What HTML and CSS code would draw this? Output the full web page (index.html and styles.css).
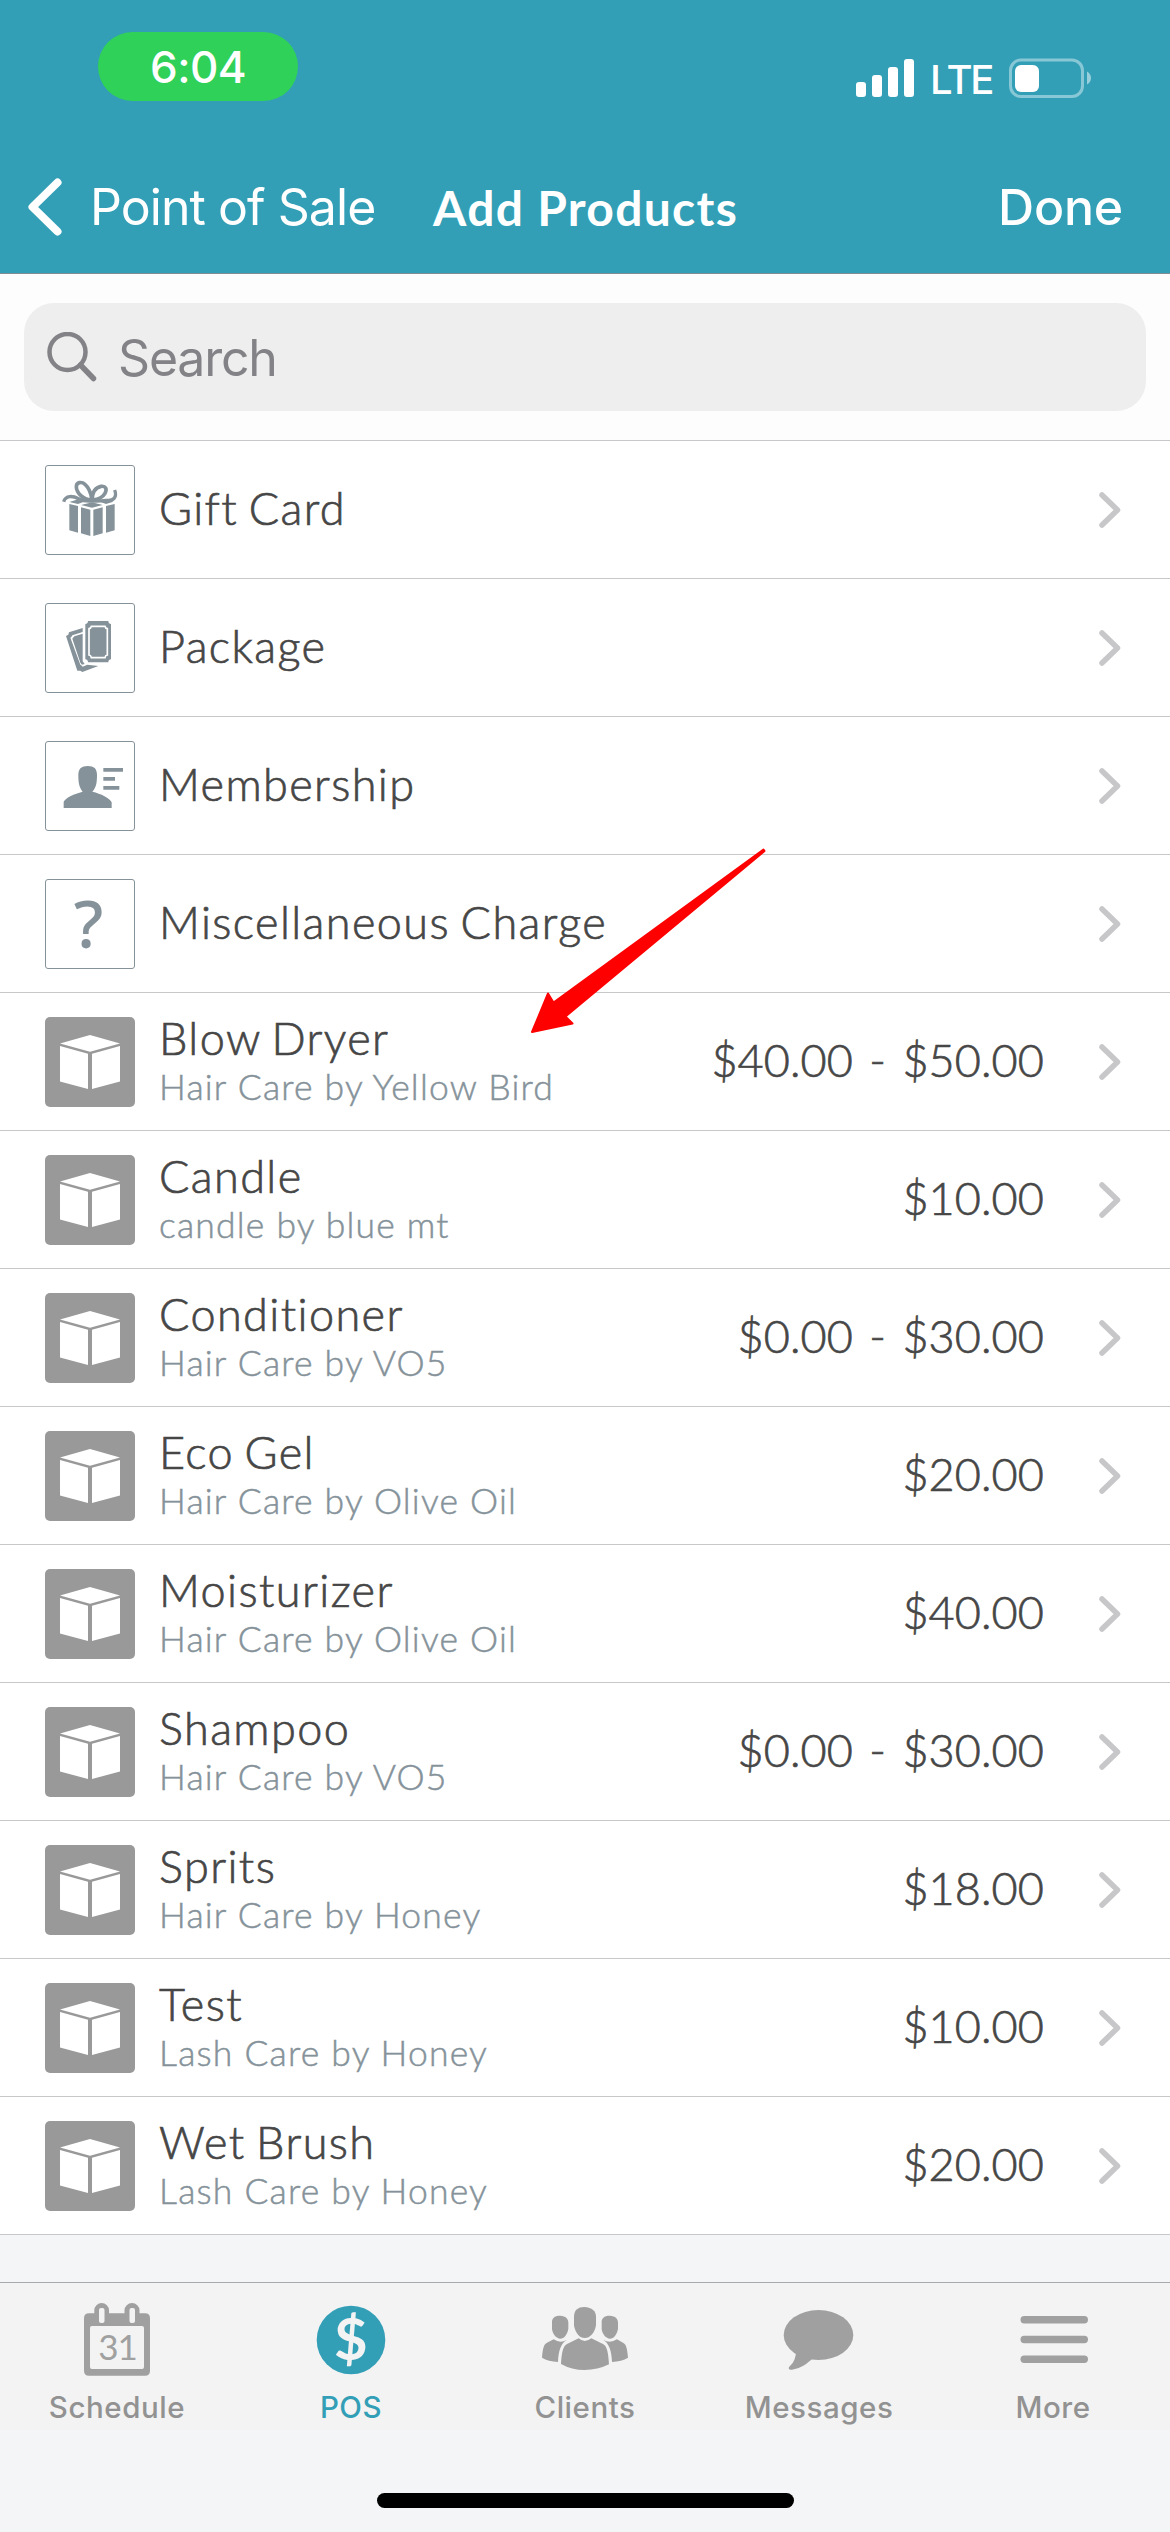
FILE: index.html
```html
<!DOCTYPE html>
<html lang="en">
<head>
<meta charset="utf-8">
<title>Add Products</title>
<link rel="stylesheet" href="styles.css">
</head>
<body>
<svg class="defs" width="0" height="0" aria-hidden="true">
  <symbol id="chevron" viewBox="0 0 22 36"><path d="M3 3 L18.5 18 L3 33" fill="none" stroke="#c7c7c9" stroke-width="5.5" stroke-linecap="round" stroke-linejoin="round"/></symbol>
  <symbol id="cube" viewBox="0 0 90 90"><path fill="#fff" d="M45 18 L75 26.5 L45 34.7 L15 26.5Z M15 29 L43 36.8 V72 L15 64.5Z M75 29 L47 36.8 V72 L75 64.5Z"/></symbol>
</svg>
<div class="screen">
  <header class="header">
    <div class="status">
      <div class="time">6:04</div>
      <div class="status-right">
        <svg width="58" height="38" viewBox="0 0 58 38" fill="#fff"><rect y="23" width="10" height="15" rx="3"/><rect x="16" y="16" width="10" height="22" rx="3"/><rect x="32" y="8" width="10" height="30" rx="3"/><rect x="48" width="10" height="38" rx="3"/></svg>
        <span class="lte">LTE</span>
        <svg width="83" height="40" viewBox="0 0 83 40"><rect x="1.5" y="2" width="72" height="36.500" rx="10.500" fill="none" stroke="#fff" stroke-opacity=".42" stroke-width="3"/><path d="M78 13.500 Q82 16 82 20 Q82 24 78 26.500Z" fill="#fff" fill-opacity=".5"/><rect x="6" y="7" width="24" height="27" rx="6" fill="#fff"/></svg>
      </div>
    </div>
    <nav class="nav">
      <svg class="back-icon" width="34" height="58" viewBox="0 0 34 58"><path d="M29.500 4.500 L4.500 29 L29.500 53.500" fill="none" stroke="#fff" stroke-width="8" stroke-linecap="round" stroke-linejoin="round"/></svg>
      <span class="back">Point of Sale</span>
      <h1 class="title">Add Products</h1>
      <span class="done">Done</span>
    </nav>
  </header>

  <div class="search-section">
    <div class="search">
      <svg width="50" height="50" viewBox="0 0 50 50" fill="none" stroke="#838387"><circle cx="20.500" cy="20" r="18" stroke-width="4.500"/><path d="M33.500 33 L46.500 46.500" stroke-width="5.500" stroke-linecap="round"/></svg>
      <span>Search</span>
    </div>
  </div>

  <main class="list">
    <div class="row">
      <div class="tile">
        <svg width="90" height="90" viewBox="45 45 270 270" fill="#85929a">
          <path d="M118 162 L144 168 V248 L118 241Z M153 172 L181 179 V258 L153 250Z M190 179 L218 172 V250 L190 258Z M228 168 L254 162 V241 L228 248Z"/>
          <path d="M118 156 L140 149 L166 154 L144 162Z M153 165 L186 157 L218 165 L186 173Z M206 154 L232 148 L250 155 L228 162Z"/>
          <path d="M186 149 C160 151 139 127 139 110 C139 96 155 94 165 103 C177 113 183 130 186 149 C187 126 197 112 213 109 C227 107 232 117 225 130 C219 141 203 151 186 149" fill="none" stroke="#85929a" stroke-width="11"/>
          <path d="M101 155 C107 135 128 137 146 146 C157 152 172 154 186 153 C202 154 215 153 229 151 C251 154 262 141 254 120" fill="none" stroke="#85929a" stroke-width="10"/>
        </svg>
      </div>
      <div class="name">Gift Card</div>
      <svg class="chevron"><use href="#chevron"/></svg>
    </div>
    <div class="row">
      <div class="tile">
        <svg width="90" height="90" viewBox="45 459 270 270" fill="#85929a">
          <path d="M108 558 L115 554 L117 547 L158 534 V546 L127 556 Q125 561 121 563 L151 644 Q155 645 158 650 L172 644 L205 648 L157 666 L151 662 L142 662 L139 653Z"/>
          <path d="M127 566 L133 559 L158 551 V634 L164 642 L156 644 L151 638Z"/>
          <path d="M174 513 H235 Q235 521 243 522 V628 Q235 629 235 637 H174 Q174 629 166 628 V522 Q174 521 174 513Z"/>
          <path d="M184 529 H225 Q226 535 232 536 V615 Q226 616 225 623 H184 Q183 616 177 615 V536 Q183 535 184 529Z" fill="none" stroke="#fff" stroke-width="5"/>
        </svg>
      </div>
      <div class="name">Package</div>
      <svg class="chevron"><use href="#chevron"/></svg>
    </div>
    <div class="row">
      <div class="tile">
        <svg width="90" height="90" viewBox="45 63 270 270" fill="#85929a">
          <path d="M101 264 V245 C108 232 132 222 158 215 C148 203 145 190 145 165 C145 146 155 138 173 138 C192 138 201 146 201 165 C201 190 198 203 187 215 C213 221 239 234 245 247 V264Z"/>
          <path d="M220 144 H279 V155 H220Z M220 171 H255 V182 H220Z M220 198 H268 V209 H220Z"/>
        </svg>
      </div>
      <div class="name">Membership</div>
      <svg class="chevron"><use href="#chevron"/></svg>
    </div>
    <div class="row">
      <div class="tile question">?</div>
      <div class="name">Miscellaneous Charge</div>
      <svg class="chevron"><use href="#chevron"/></svg>
    </div>
    <div class="row">
      <svg class="cube"><use href="#cube"/></svg>
      <div class="info"><div class="name">Blow Dryer</div><div class="sub">Hair Care by Yellow Bird</div></div>
      <div class="price">$40.00 - $50.00</div>
      <svg class="chevron"><use href="#chevron"/></svg>
    </div>
    <div class="row">
      <svg class="cube"><use href="#cube"/></svg>
      <div class="info"><div class="name">Candle</div><div class="sub">candle by blue mt</div></div>
      <div class="price">$10.00</div>
      <svg class="chevron"><use href="#chevron"/></svg>
    </div>
    <div class="row">
      <svg class="cube"><use href="#cube"/></svg>
      <div class="info"><div class="name">Conditioner</div><div class="sub">Hair Care by VO5</div></div>
      <div class="price">$0.00 - $30.00</div>
      <svg class="chevron"><use href="#chevron"/></svg>
    </div>
    <div class="row">
      <svg class="cube"><use href="#cube"/></svg>
      <div class="info"><div class="name">Eco Gel</div><div class="sub">Hair Care by Olive Oil</div></div>
      <div class="price">$20.00</div>
      <svg class="chevron"><use href="#chevron"/></svg>
    </div>
    <div class="row">
      <svg class="cube"><use href="#cube"/></svg>
      <div class="info"><div class="name">Moisturizer</div><div class="sub">Hair Care by Olive Oil</div></div>
      <div class="price">$40.00</div>
      <svg class="chevron"><use href="#chevron"/></svg>
    </div>
    <div class="row">
      <svg class="cube"><use href="#cube"/></svg>
      <div class="info"><div class="name">Shampoo</div><div class="sub">Hair Care by VO5</div></div>
      <div class="price">$0.00 - $30.00</div>
      <svg class="chevron"><use href="#chevron"/></svg>
    </div>
    <div class="row">
      <svg class="cube"><use href="#cube"/></svg>
      <div class="info"><div class="name">Sprits</div><div class="sub">Hair Care by Honey</div></div>
      <div class="price">$18.00</div>
      <svg class="chevron"><use href="#chevron"/></svg>
    </div>
    <div class="row">
      <svg class="cube"><use href="#cube"/></svg>
      <div class="info"><div class="name">Test</div><div class="sub">Lash Care by Honey</div></div>
      <div class="price">$10.00</div>
      <svg class="chevron"><use href="#chevron"/></svg>
    </div>
    <div class="row">
      <svg class="cube"><use href="#cube"/></svg>
      <div class="info"><div class="name">Wet Brush</div><div class="sub">Lash Care by Honey</div></div>
      <div class="price">$20.00</div>
      <svg class="chevron"><use href="#chevron"/></svg>
    </div>
  </main>

  <nav class="tabs">
    <div class="tab">
      <svg width="90" height="76" viewBox="0 0 90 76">
        <path fill="#a0a0a0" d="M17 10.300 H22.300 V7.300 A7.350 7.300 0 0 1 37 7.300 V10.300 H52.500 V7.300 A7.500 7.300 0 0 1 67.500 7.300 V10.300 H73 Q78 10.300 78 15.300 V67.700 Q78 72.700 73 72.700 H17 Q12 72.700 12 67.700 V15.300 Q12 10.300 17 10.300Z"/>
        <g fill="#f3f3f3"><rect x="27" y="5" width="5.500" height="15" rx="2"/><rect x="57.500" y="5" width="5.500" height="15" rx="2"/><rect x="18" y="23" width="54" height="43" rx="2"/></g>
        <text class="cal-day" x="45.500" y="57" text-anchor="middle">31</text>
      </svg>
      <span>Schedule</span>
    </div>
    <div class="tab active">
      <svg width="90" height="76" viewBox="0 0 90 76"><circle cx="45" cy="37" r="34.300" fill="#329fb7"/><text class="dollar" x="45" y="57" text-anchor="middle">$</text></svg>
      <span>POS</span>
    </div>
    <div class="tab">
      <svg width="90" height="76" viewBox="27 24 270 228" fill="#a0a0a0">
        <path id="side-head" d="M63 84 C62 70 70 62 87 62 C105 63 112 71 112 84 V101 C109 119 99 131 88 131 C76 131 66 119 63 103Z"/>
        <use href="#side-head" x="149"/>
        <path d="M33 188 C35 160 39 147 48 143 L68 133 Q88 147 108 134 C90 144 82 168 81 201 Q52 199 33 188Z M291 188 C289 160 285 147 276 143 L258 133 Q237 147 216 134 C234 144 242 168 243 201 Q272 199 291 188Z"/>
        <path d="M129 65 C129 46 140 36 160 36 C183 38 195 48 195 66 V90 C191 115 177 129 161 129 C146 129 134 115 129 92Z"/>
        <path d="M90 207 C92 174 96 152 108 147 L143 130 Q161 146 181 130 L216 147 C228 152 232 174 234 208 Q200 225 161 225 Q122 225 90 207Z"/>
      </svg>
      <span>Clients</span>
    </div>
    <div class="tab">
      <svg width="90" height="76" viewBox="0 0 90 76" fill="#a0a0a0"><ellipse cx="44.500" cy="32" rx="34.800" ry="25"/><path d="M22 50 C21 57 19 60 16 63 C13 66 16 67.500 19 66.500 C27 65 33 61 39 55Z"/></svg>
      <span>Messages</span>
    </div>
    <div class="tab">
      <svg width="90" height="76" viewBox="0 0 90 76" fill="#a0a0a0"><rect x="12.500" y="13" width="67.500" height="7.500" rx="3.700"/><rect x="12.500" y="32.700" width="67.500" height="7.500" rx="3.700"/><rect x="12.500" y="52.500" width="67.500" height="7.500" rx="3.700"/></svg>
      <span>More</span>
    </div>
  </nav>
  <div class="home"></div>
  <svg class="arrow" width="240" height="190" viewBox="528 846 240 190"><path d="M532 1032 L548 993.500 L553.500 1002.500 L763.500 849.500 L764.500 851 L565.500 1016.500 L572.500 1023.500Z" fill="#f00" stroke="#f00" stroke-width="2" stroke-linejoin="round"/></svg>
</div>
</body>
</html>
```
FILE: styles.css
```css
* { box-sizing: border-box; }
body { margin: 0; background: #f4f5f7; }
svg { display: block; flex: none; }
.defs { position: absolute; }
.screen {
  position: relative;
  width: 1170px;
  height: 2532px;
  overflow: hidden;
  display: flex;
  flex-direction: column;
  font-family: Lato, "Liberation Sans", sans-serif;
  color: #464646;
}

.header {
  height: 274px;
  background: #329fb7;
  border-bottom: 1px solid #808e93;
  color: #fff;
  font-family: Inter, "Liberation Sans", sans-serif;
}
.status {
  height: 140px;
  padding: 32px 78px 0 98px;
  display: flex;
  justify-content: space-between;
}
.time {
  width: 200px;
  height: 69px;
  border-radius: 35px;
  background: #30d158;
  font-size: 44px;
  line-height: 71px;
  font-weight: 500;
  letter-spacing: -0.6px;
  text-align: center;
}
.status-right { display: flex; align-items: flex-start; padding-top: 26px; }
.status-right svg:first-child { margin-top: 1px; }
.lte {
  width: 95px;
  padding-left: 16px;
  font-size: 40px;
  font-weight: 500;
  line-height: 43px;
  letter-spacing: -2.4px;
}
.nav {
  height: 134px;
  padding: 0 47px 1px 28px;
  display: flex;
  align-items: center;
  white-space: nowrap;
}
.back { width: 343px; margin-left: 28px; font-size: 50px; letter-spacing: -0.95px; line-height: 60px; }
.title {
  margin: 3px 0 0;
  font: 700 48px/60px Lato, "Liberation Sans", sans-serif;
  letter-spacing: 1.3px;
}
.done { margin-left: auto; font-size: 50px; font-weight: 500; line-height: 60px; letter-spacing: -0.2px; }

.search-section {
  height: 167px;
  padding: 29px 24px 0;
  background: #fdfdfd;
  border-bottom: 1px solid #c8c7cc;
}
.search {
  height: 108px;
  padding-left: 23px;
  border-radius: 30px;
  background: #eee;
  display: flex;
  align-items: center;
  gap: 21px;
  font: 50px/60px Inter, "Liberation Sans", sans-serif;
  letter-spacing: -1.2px;
  color: #838387;
}
.search span { padding-top: 2px; }

.row {
  height: 138px;
  padding: 0 49px 0 45px;
  display: flex;
  align-items: center;
  background: #fff;
  border-bottom: 1px solid #c8c8ca;
  white-space: nowrap;
}
.tile { width: 90px; height: 90px; border: 1px solid #85929a; border-radius: 3px; }
.tile svg { margin: -1px; }
.question {
  padding-right: 3px;
  font: 500 66px/84px "Noto Sans", "Liberation Sans", sans-serif;
  color: #85929a;
  text-align: center;
}
.cube { width: 90px; height: 90px; border-radius: 5px; background: #999; }
.name {
  margin-left: 24px;
  padding-bottom: 3px;
  font-size: 45px;
  font-weight: 300;
  line-height: 50px;
  letter-spacing: 1.4px;
  word-spacing: -3px;
  -webkit-text-stroke: 0.7px currentColor;
}
.info { margin-left: 24px; padding-top: 1px; }
.info .name { margin-left: 0; padding: 0; }
.sub {
  font-size: 35.5px;
  font-weight: 300;
  line-height: 48px;
  letter-spacing: 1.2px;
  color: #85929a;
  -webkit-text-stroke: 0.5px currentColor;
}
.price {
  margin-left: auto;
  padding-bottom: 3px;
  font-size: 45px;
  font-weight: 300;
  line-height: 50px;
  letter-spacing: 0.1px;
  word-spacing: 4px;
  -webkit-text-stroke: 0.7px currentColor;
}
.chevron { width: 22px; height: 36px; margin-left: auto; }
.price + .chevron { margin-left: 55px; }

.tabs {
  height: 148px;
  margin-top: 47px;
  border-top: 1px solid #a7a9ab;
  background: #f3f3f3;
  display: grid;
  grid-template-columns: repeat(5, 234px);
  color: #929292;
  font: 500 29.5px/36px Inter, "Liberation Sans", sans-serif;
  letter-spacing: 0.55px;
}
.tab { display: flex; flex-direction: column; align-items: center; padding-top: 20px; gap: 10px; }
.active { color: #329fb7; }
.cal-day { font: 400 35px Lato, sans-serif; letter-spacing: -1px; fill: #a0a0a0; }
.dollar { font: 700 58px Lato, sans-serif; fill: #f3f3f3; }
.home { width: 417px; height: 15px; margin: 63px auto 0; border-radius: 8px; background: #000; }

.arrow { position: absolute; left: 528px; top: 846px; }
```
